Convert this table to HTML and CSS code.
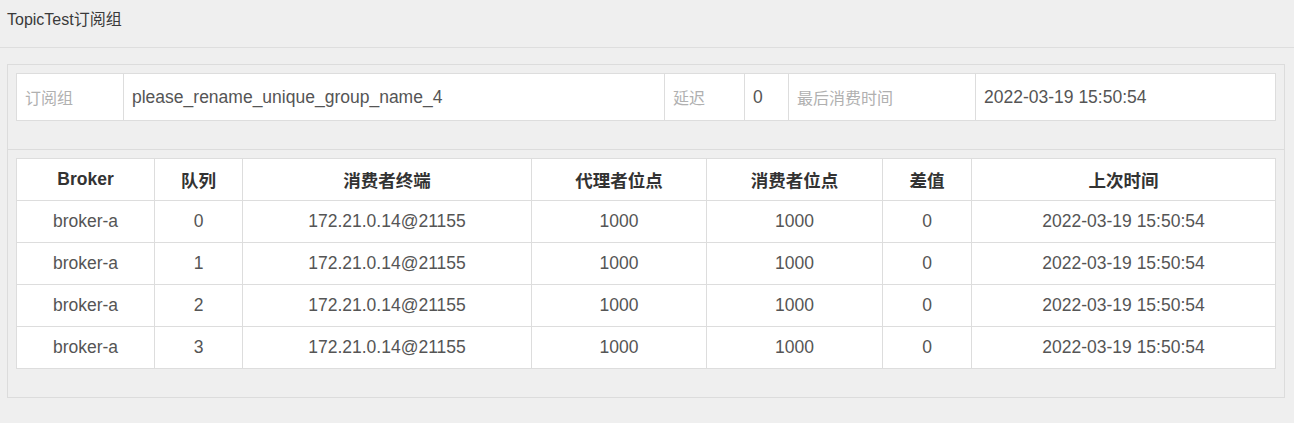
FILE: index.html
```html
<!DOCTYPE html>
<html lang="zh">
<head>
<meta charset="utf-8">
<title>TopicTest订阅组</title>
<link rel="stylesheet" href="styles.css">
</head>
<body>
<div class="page-header">TopicTest订阅组</div>
<div class="panel">
  <div class="panel-section">
    <table class="info-table">
      <colgroup>
        <col class="c-107"><col class="c-541"><col class="c-80"><col class="c-44"><col class="c-187"><col class="c-300">
      </colgroup>
      <tr>
        <td class="label">订阅组</td>
        <td>please_rename_unique_group_name_4</td>
        <td class="label">延迟</td>
        <td>0</td>
        <td class="label">最后消费时间</td>
        <td>2022-03-19 15:50:54</td>
      </tr>
    </table>
  </div>
  <div class="panel-section bordered-top">
    <table class="data-table">
      <colgroup>
        <col class="d-138"><col class="d-88"><col class="d-289"><col class="d-175"><col class="d-176"><col class="d-89"><col class="d-304">
      </colgroup>
      <thead>
        <tr><th>Broker</th><th>队列</th><th>消费者终端</th><th>代理者位点</th><th>消费者位点</th><th>差值</th><th>上次时间</th></tr>
      </thead>
      <tbody>
        <tr><td>broker-a</td><td>0</td><td>172.21.0.14@21155</td><td>1000</td><td>1000</td><td>0</td><td>2022-03-19 15:50:54</td></tr>
        <tr><td>broker-a</td><td>1</td><td>172.21.0.14@21155</td><td>1000</td><td>1000</td><td>0</td><td>2022-03-19 15:50:54</td></tr>
        <tr><td>broker-a</td><td>2</td><td>172.21.0.14@21155</td><td>1000</td><td>1000</td><td>0</td><td>2022-03-19 15:50:54</td></tr>
        <tr><td>broker-a</td><td>3</td><td>172.21.0.14@21155</td><td>1000</td><td>1000</td><td>0</td><td>2022-03-19 15:50:54</td></tr>
      </tbody>
    </table>
  </div>
</div>
</body>
</html>
```

FILE: styles.css
```css
html, body {
  margin: 0;
  padding: 0;
  background: #efefef;
  font-family: "Liberation Sans", Arial, "Noto Sans CJK SC", sans-serif;
  color: #555;
}

.page-header {
  height: 48px;
  box-sizing: border-box;
  padding: 10px 7px 0;
  font-size: 16px;
  line-height: 20px;
  color: #3a3a3a;
  border-bottom: 1px solid #dedede;
}

.panel {
  margin: 16px 9px 0 7px;
  border: 1px solid #dcdcdc;
}

.panel-section {
  padding: 8px 8px 28px;
}

.bordered-top {
  border-top: 1px solid #dcdcdc;
}

table {
  width: 100%;
  border-collapse: collapse;
  table-layout: fixed;
  background: #fff;
}

td, th {
  border: 1px solid #dddddd;
  white-space: nowrap;
  overflow: hidden;
}

.info-table td {
  height: 47px;
  padding: 0 8px;
  font-size: 17.5px;
  color: #555;
  box-sizing: border-box;
}

.info-table td.label {
  font-size: 16px;
  color: #b0b0b0;
}

.data-table th,
.data-table td {
  height: 42px;
  padding: 0 8px;
  text-align: center;
  font-size: 17.5px;
  box-sizing: border-box;
}

.data-table th {
  font-weight: bold;
  color: #333;
}

.data-table td {
  color: #555;
}

.c-107 { width: 107px; }
.c-541 { width: 541px; }
.c-80 { width: 80px; }
.c-44 { width: 44px; }
.c-187 { width: 187px; }
.c-300 { width: 300px; }

.d-138 { width: 138px; }
.d-88 { width: 88px; }
.d-289 { width: 289px; }
.d-175 { width: 175px; }
.d-176 { width: 176px; }
.d-89 { width: 89px; }
.d-304 { width: 304px; }
```
